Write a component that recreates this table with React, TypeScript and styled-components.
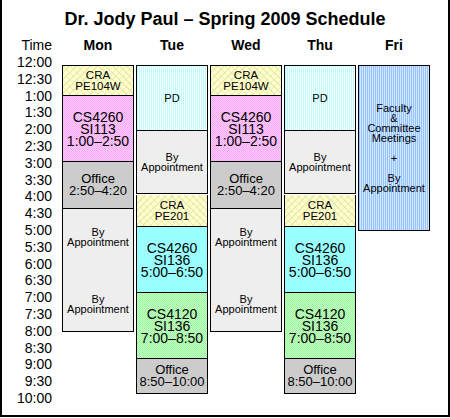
import React from 'react';
import styled, { createGlobalStyle, css } from 'styled-components';

const GlobalStyle = createGlobalStyle`
  html, body {
    margin: 0;
    padding: 0;
    background: #ffffff;
  }
  body {
    font-family: "Liberation Sans", Arial, sans-serif;
    color: #000000;
  }
`;

const Frame = styled.div`
  width: 450px;
  height: 417px;
  box-sizing: border-box;
  border: 2px solid #000;
  border-top: none;
  display: flex;
  flex-direction: column;
`;

const Title = styled.h1`
  margin: 0;
  height: 38px;
  line-height: 38px;
  font-size: 18px;
  font-weight: bold;
  text-align: center;
`;

const Schedule = styled.div`
  display: grid;
  grid-template-columns: 58px repeat(5, 72px);
  grid-template-rows: 16px auto;
  column-gap: 2px;
`;

const TimeHead = styled.div`
  padding-right: 8px;
  text-align: right;
  font-size: 14px;
  line-height: 14px;
`;

const DayHead = styled.div`
  text-align: center;
  font-size: 14px;
  font-weight: bold;
  line-height: 14px;
`;

const TimeCol = styled.div`
  display: flex;
  flex-direction: column;
  padding-right: 8px;
  text-align: right;
  font-size: 14px;
  line-height: 16.8px;
`;

const Day = styled.div`
  display: flex;
  flex-direction: column;
  padding-top: 11px;
`;

type Kind = 'cra' | 'pink' | 'office' | 'appt' | 'pd' | 'cyan' | 'green' | 'fri';

// 1px dither, like the old bitmap fills
const checker = (dot: string) => css`
  background-image: conic-gradient(${dot} 25%, transparent 0 50%, ${dot} 0 75%, transparent 0);
  background-size: 2px 2px;
`;

const fills: Record<Kind, ReturnType<typeof css>> = {
  cra: css`
    background-color: #ffffcc;
    background-image:
      repeating-linear-gradient(45deg, rgba(200, 200, 130, 0.35) 0 1px, transparent 1px 5px),
      repeating-linear-gradient(-45deg, rgba(200, 200, 130, 0.35) 0 1px, transparent 1px 5px);
  `,
  pink: css`
    background-color: #ffccff;
    ${checker('#f6a8f6')}
  `,
  office: css`
    background-color: #cccccc;
  `,
  appt: css`
    background-color: #eeeeee;
  `,
  pd: css`
    background-color: #ffffff;
    background-image: repeating-linear-gradient(90deg, #b8ffff 0 1px, #ffffff 1px 2px);
  `,
  cyan: css`
    background-color: #99ffff;
  `,
  green: css`
    background-color: #99f599;
    ${checker('#c8ffc8')}
  `,
  fri: css`
    background-color: #99ccff;
    background-image: repeating-linear-gradient(90deg, #94c4ff 0 1px, #d2e6ff 1px 2px);
  `,
};

const Block = styled.div<{ $kind: Kind; $h: number; $detached?: boolean }>`
  box-sizing: border-box;
  height: ${p => p.$h}px;
  border: 1px solid #000;
  display: flex;
  flex-direction: column;
  align-items: center;
  justify-content: center;
  text-align: center;
  ${p => fills[p.$kind]}

  & + & {
    border-top: none;
  }

  ${p => p.$detached && css`
    && {
      margin-top: 1px;
      border-top: 1px solid #000;
    }
  `}
`;

const Stack = styled.div`
  display: flex;
  flex-direction: column;
  gap: 47px;
`;

const Small = styled.div`
  font-size: 11px;
  line-height: 10px;
`;

const Cra = styled.div`
  font-size: 11.5px;
  line-height: 11px;
`;

const ClassText = styled.div`
  font-size: 14px;
  line-height: 12px;
`;

const OfficeText = styled.div`
  font-size: 13px;
  line-height: 12px;
`;

const times = [
  '12:00', '12:30', '1:00', '1:30', '2:00', '2:30', '3:00', '3:30', '4:00', '4:30', '5:00',
  '5:30', '6:00', '6:30', '7:00', '7:30', '8:00', '8:30', '9:00', '9:30', '10:00',
];

const MonWed = () => (
  <Day>
    <Block $kind="cra" $h={31}>
      <Cra>CRA<br />PE104W</Cra>
    </Block>
    <Block $kind="pink" $h={66}>
      <ClassText>CS4260<br />SI113<br />1:00–2:50</ClassText>
    </Block>
    <Block $kind="office" $h={47}>
      <OfficeText>Office<br />2:50–4:20</OfficeText>
    </Block>
    <Block $kind="appt" $h={123}>
      <Stack>
        <Small>By<br />Appointment</Small>
        <Small>By<br />Appointment</Small>
      </Stack>
    </Block>
  </Day>
);

const TueThu = () => (
  <Day>
    <Block $kind="pd" $h={66}>
      <Small>PD</Small>
    </Block>
    <Block $kind="appt" $h={63}>
      <Small>By<br />Appointment</Small>
    </Block>
    <Block $kind="cra" $h={32} $detached>
      <Cra>CRA<br />PE201</Cra>
    </Block>
    <Block $kind="cyan" $h={66}>
      <ClassText>CS4260<br />SI136<br />5:00–6:50</ClassText>
    </Block>
    <Block $kind="green" $h={66}>
      <ClassText>CS4120<br />SI136<br />7:00–8:50</ClassText>
    </Block>
    <Block $kind="office" $h={35}>
      <OfficeText>Office<br />8:50–10:00</OfficeText>
    </Block>
  </Day>
);

const App = () => {
  return (
    <>
      <GlobalStyle />
      <Frame>
        <Title>Dr. Jody Paul – Spring 2009 Schedule</Title>
        <Schedule>
          <TimeHead>Time</TimeHead>
          <DayHead>Mon</DayHead>
          <DayHead>Tue</DayHead>
          <DayHead>Wed</DayHead>
          <DayHead>Thu</DayHead>
          <DayHead>Fri</DayHead>

          <TimeCol>
            {times.map(t => (
              <span key={t}>{t}</span>
            ))}
          </TimeCol>
          <MonWed />
          <TueThu />
          <MonWed />
          <TueThu />
          <Day>
            <Block $kind="fri" $h={166}>
              <Small>
                Faculty<br />&amp;<br />Committee<br />Meetings<br /><br />+<br /><br />By<br />Appointment
              </Small>
            </Block>
          </Day>
        </Schedule>
      </Frame>
    </>
  );
};

export default App;
